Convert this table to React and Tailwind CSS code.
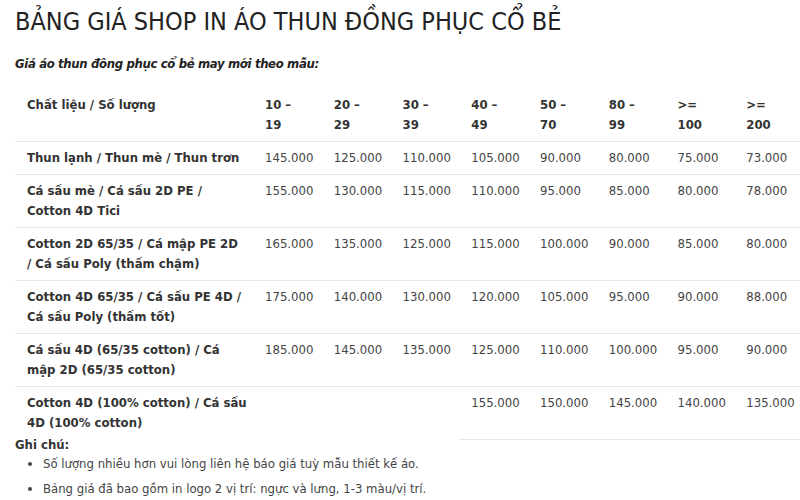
import React from "react";

const headers = ["10 – 19", "20 – 29", "30 – 39", "40 – 49", "50 – 70", "80 – 99", ">= 100", ">= 200"];

const rows = [
  { name: "Thun lạnh / Thun mè / Thun trơn", prices: ["145.000", "125.000", "110.000", "105.000", "90.000", "80.000", "75.000", "73.000"] },
  { name: "Cá sấu mè / Cá sấu 2D PE / Cotton 4D Tici", prices: ["155.000", "130.000", "115.000", "110.000", "95.000", "85.000", "80.000", "78.000"] },
  { name: "Cotton 2D 65/35 / Cá mập PE 2D / Cá sấu Poly (thấm chậm)", prices: ["165.000", "135.000", "125.000", "115.000", "100.000", "90.000", "85.000", "80.000"] },
  { name: "Cotton 4D 65/35 / Cá sấu PE 4D / Cá sấu Poly (thấm tốt)", prices: ["175.000", "140.000", "130.000", "120.000", "105.000", "95.000", "90.000", "88.000"] },
  { name: "Cá sấu 4D (65/35 cotton) / Cá mập 2D (65/35 cotton)", prices: ["185.000", "145.000", "135.000", "125.000", "110.000", "100.000", "95.000", "90.000"] },
];

const lastRow = {
  name: "Cotton 4D (100% cotton) / Cá sấu 4D (100% cotton)",
  prices: ["", "", "", "155.000", "150.000", "145.000", "140.000", "135.000"],
};

export default function App() {
  return (
    <div className="w-[800px] h-[500px] overflow-hidden bg-white text-[#333] font-['DejaVu_Sans_Condensed','DejaVu_Sans',Verdana,sans-serif]">
      <div className="pl-[15px]">
        <h1 className="pt-[6px] text-[25px] leading-[32px] text-[#222]">
          BẢNG GIÁ SHOP IN ÁO THUN ĐỒNG PHỤC CỔ BẺ
        </h1>
        <p className="mt-[16px] text-[13px] leading-[20px] font-bold italic text-[#222] tracking-[-0.35px]">
          Giá áo thun đông phục cổ bẻ may mới theo mẫu:
        </p>

        <table className="mt-[14px] table-fixed border-collapse text-[13px] leading-[20px] w-[788px]">
          <colgroup>
            <col className="w-[238px]" />
            {headers.map((h) => (
              <col key={h} className="w-[68.75px]" />
            ))}
          </colgroup>
          <thead>
            <tr className="border-b border-[#e6e6e6]">
              <th className="text-left align-top font-bold px-[12px] pt-[7px] pb-[6px]">Chất liệu / Số lượng</th>
              {headers.map((h) => (
                <th key={h} className="text-left align-top font-bold px-[12px] pt-[7px] pb-[6px]">
                  {h}
                </th>
              ))}
            </tr>
          </thead>
          <tbody>
            {rows.map((r) => (
              <tr key={r.name} className="border-b border-[#e6e6e6]">
                <td className="align-top font-bold px-[12px] py-[6px]">{r.name}</td>
                {r.prices.map((p, i) => (
                  <td key={i} className="align-top text-[#444] px-[12px] py-[6px]">
                    {p}
                  </td>
                ))}
              </tr>
            ))}
            <tr>
              <td className="align-top font-bold pl-[12px] pr-0 py-[6px]">{lastRow.name}</td>
              {lastRow.prices.map((p, i) => (
                <td
                  key={i}
                  className={`align-top text-[#444] px-[12px] py-[6px] ${i >= 3 ? "border-b border-[#e6e6e6]" : ""}`}
                >
                  {p}
                </td>
              ))}
            </tr>
          </tbody>
        </table>

        <div className="-mt-[5px] text-[13px] leading-[20px]">
          <p className="font-bold text-[#333]">Ghi chú:</p>
          <ul className="-mt-[4px] pl-[28px] list-disc text-[#444]">
            <li className="leading-[25px]">Số lượng nhiều hơn vui lòng liên hệ báo giá tuỳ mẫu thiết kế áo.</li>
            <li className="leading-[25px]">Bảng giá đã bao gồm in logo 2 vị trí: ngực và lưng, 1-3 màu/vị trí.</li>
          </ul>
        </div>
      </div>
    </div>
  );
}
